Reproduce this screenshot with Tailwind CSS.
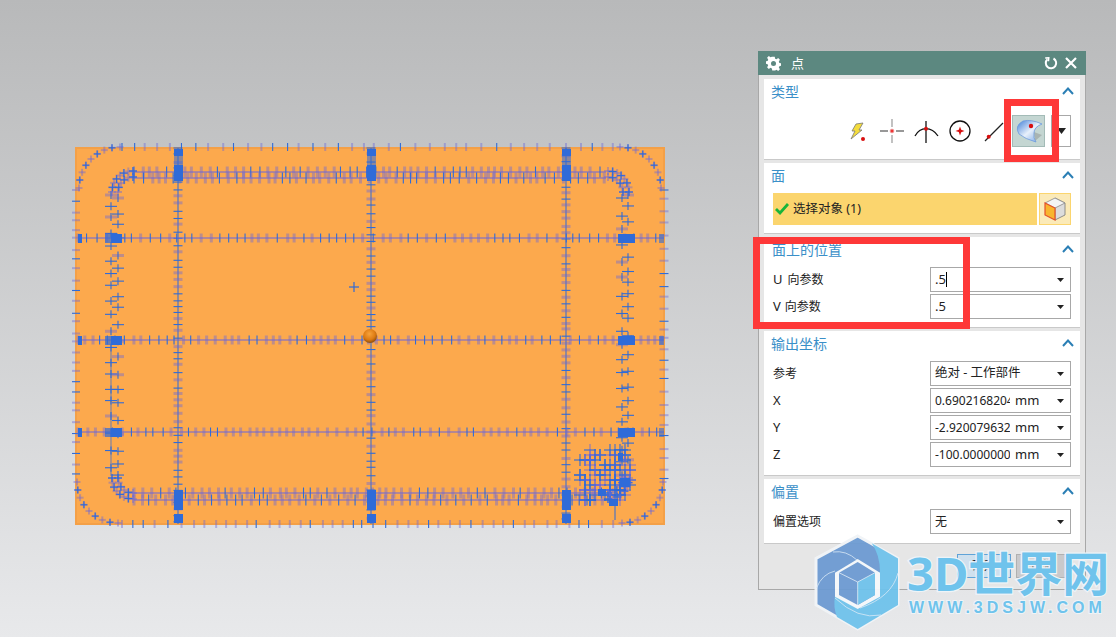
<!DOCTYPE html>
<html lang="zh">
  <head>
    <meta charset="UTF-8" />
    <title>点</title>
    <script src="https://cdn.jsdelivr.net/npm/@tailwindcss/browser@4"></script>
  </head>
  <body class="m-0 overflow-hidden">
    <div class="relative w-[1116px] h-[637px] overflow-hidden bg-linear-to-b from-[#b8b9ba] to-[#e8e9eb] font-['Noto_Sans','Noto_Sans_CJK_SC',sans-serif] text-[12px] text-[#222]">
      <!-- Part in the graphics window -->
      <svg id="part" class="absolute left-0 top-0" width="760" height="637" viewBox="0 0 760 637">
        <defs>
          <radialGradient id="ball" cx="45%" cy="35%" r="70%">
            <stop offset="0" stop-color="#f7a23a" />
            <stop offset="0.6" stop-color="#dd7a12" />
            <stop offset="1" stop-color="#7d4508" />
          </radialGradient>
        </defs>
        <rect x="75" y="147" width="590" height="378" fill="#fdb35f" />
        <rect x="76" y="148" width="588" height="376" fill="#fca94d" stroke="#f4a047" stroke-width="2" />
        <g id="marks"></g>
        <circle cx="370" cy="336" r="7" fill="url(#ball)" />
      </svg>

      <!-- Point dialog -->
      <div class="absolute left-[758px] top-[51px] w-[328px] h-[539px] bg-[#e6e6e6] border-x border-b border-[#a8a8a8]">
        <div class="h-[24px] -mx-px bg-[#5c8880] flex items-center pl-[8px] pr-[9px] text-white">
          <svg width="15" height="15" viewBox="0 0 24 24" fill="#fff">
            <path fill-rule="evenodd" d="M10 1h4l.6 3.200 2.200.9 2.700-1.800 2.800 2.800-1.800 2.700.9 2.200 3.200.6v4l-3.200.6-.9 2.200 1.800 2.700-2.800 2.800-2.700-1.800-2.200.9L14 23h-4l-.6-3.200-2.200-.9-2.700 1.800-2.800-2.800 1.800-2.700-.9-2.200-3.200-.6v-4l3.200-.6.9-2.200-1.800-2.700 2.800-2.800 2.700 1.800 2.200-.9zM12 8a4 4 0 1 0 0 8 4 4 0 0 0 0-8z" />
          </svg>
          <span class="ml-[10px] text-[13px] leading-none">点</span>
          <svg class="ml-auto" width="14" height="14" viewBox="0 0 14 14" fill="none" stroke="#fff" stroke-width="2">
            <path d="M3.500 3.200A5.200 5.200 0 1 0 9.500 2.500" />
            <path d="M1.200 2 4.800 1.800 4.500 5.200" stroke-width="1.400" />
          </svg>
          <svg class="ml-[7px]" width="12" height="12" viewBox="0 0 12 12" fill="none" stroke="#fff" stroke-width="2.200">
            <path d="M1 1l10 10M11 1 1 11" />
          </svg>
        </div>

        <div class="flex flex-col gap-[4px] px-[5px] pt-[4px]">
          <!-- 类型 -->
          <section class="h-[80px] bg-white shadow-[0_1px_0_#c9c9c9]">
            <div class="h-[26px] pb-[2px] flex items-center justify-between pl-[7px] pr-[6px] text-[14px] text-[#3a8fc8]">
              <span>类型</span>
              <svg width="12" height="8" viewBox="0 0 12 8" fill="none" stroke="#2b7fb5" stroke-width="2"><path d="M1 7l5-5.500L11 7" /></svg>
            </div>
            <div class="flex justify-end items-center mt-[10px] pr-[9px] h-[32px]">
              <span class="w-[34px] flex justify-center">
                <svg width="24" height="24" viewBox="0 0 24 24">
                  <path d="M10 5l7-1-4 7h3L5 20l4-8H6z" fill="#f4dc3c" stroke="#777" stroke-width="0.800" />
                  <circle cx="17" cy="20" r="2" fill="#d80f0f" />
                </svg>
              </span>
              <span class="w-[34px] flex justify-center">
                <svg width="26" height="26" viewBox="0 0 26 26" fill="none">
                  <path d="M1 13h8M17 13h8" stroke="#333" stroke-width="1.200" />
                  <path d="M13 1v8M13 17v8" stroke="#999" stroke-width="1.200" />
                  <circle cx="13" cy="13" r="1.800" fill="#e33" stroke="#e88" />
                </svg>
              </span>
              <span class="w-[34px] flex justify-center">
                <svg width="26" height="26" viewBox="0 0 26 26" fill="none" stroke="#111" stroke-width="1.300">
                  <path d="M2 18Q6 10.700 13 10.700T25 18" />
                  <path d="M13 3v22" />
                  <circle cx="13" cy="10.700" r="2" fill="#d80f0f" stroke="none" />
                </svg>
              </span>
              <span class="w-[34px] flex justify-center">
                <svg width="26" height="26" viewBox="0 0 26 26" fill="none">
                  <circle cx="13" cy="13" r="10" stroke="#111" stroke-width="1.300" />
                  <path d="M13 8.500l1.200 3.300 3.300 1.200-3.300 1.200L13 17.500l-1.200-3.500-3.300-1 3.300-1.200z" fill="#d80f0f" />
                </svg>
              </span>
              <span class="w-[34px] flex justify-center">
                <svg width="26" height="26" viewBox="0 0 26 26" fill="none">
                  <path d="M4 23 22 5" stroke="#222" stroke-width="1.300" />
                  <circle cx="7.700" cy="18.700" r="2" fill="#d80f0f" />
                </svg>
              </span>
              <span class="ml-px w-[33px] h-[32px] bg-[#c4d6d2] border border-[#a3bbb7] flex items-center justify-center">
                <svg width="28" height="26" viewBox="0 0 28 26">
                  <defs>
                    <linearGradient id="surf" x1="0" y1="0" x2="1" y2="1">
                      <stop offset="0" stop-color="#3f7fd8" />
                      <stop offset="0.5" stop-color="#e8f0fb" />
                      <stop offset="1" stop-color="#6ea0e4" />
                    </linearGradient>
                  </defs>
                  <path d="M19 14l8 3-7 6z" fill="#a9b4b2" />
                  <path d="M8 3Q16 1 27 6Q19 9 19 15Q18 20 21 24Q10 21 4 16Q-1 8 8 3z" fill="url(#surf)" stroke="#6d9bdc" stroke-width="0.800" />
                  <circle cx="16" cy="8" r="2.200" fill="#d80f0f" />
                </svg>
              </span>
              <span class="ml-[6px] w-[20px] h-[32px] border border-[#a8a8a8] flex items-center justify-center">
                <svg width="9" height="6" viewBox="0 0 9 6"><path d="M0 0h9L4.500 6z" fill="#222" /></svg>
              </span>
            </div>
          </section>

          <!-- 面 -->
          <section class="h-[70px] bg-white shadow-[0_1px_0_#c9c9c9]">
            <div class="h-[26px] pb-[2px] flex items-center justify-between pl-[7px] pr-[6px] text-[14px] text-[#3a8fc8]">
              <span>面</span>
              <svg width="12" height="8" viewBox="0 0 12 8" fill="none" stroke="#2b7fb5" stroke-width="2"><path d="M1 7l5-5.500L11 7" /></svg>
            </div>
            <div class="flex mt-[4px] pl-[9px] pr-[9px] h-[32px]">
              <div class="flex-1 bg-[#fbd56e] flex items-center pl-[2px]">
                <svg width="14" height="12" viewBox="0 0 14 12" fill="none" stroke="#18b53a" stroke-width="2.800"><path d="M1 6l4 4 8-9" /></svg>
                <span class="ml-[4px] text-[12.500px]">选择对象 (1)</span>
              </div>
              <div class="ml-[2px] w-[32px] bg-[#fbeab8] border border-[#fbd56e] flex items-center justify-center">
                <svg width="22" height="24" viewBox="0 0 22 24">
                  <path d="M11 1l10 5v12l-10 5z" fill="#dcdcdc" stroke="#777" stroke-width="0.800" />
                  <path d="M11 1 1 6l10 5 10-5z" fill="#f4f4f4" stroke="#888" stroke-width="0.800" />
                  <path d="M1 6l10 5v12L1 18z" fill="#f8b52e" stroke="#e4502a" stroke-width="1.200" />
                </svg>
              </div>
            </div>
          </section>

          <!-- 面上的位置 -->
          <section class="h-[90px] bg-white shadow-[0_1px_0_#c9c9c9]">
            <div class="h-[26px] pb-[2px] flex items-center justify-between pl-[8px] pr-[6px] text-[14px] text-[#3a8fc8]">
              <span>面上的位置</span>
              <svg width="12" height="8" viewBox="0 0 12 8" fill="none" stroke="#2b7fb5" stroke-width="2"><path d="M1 7l5-5.500L11 7" /></svg>
            </div>
            <div class="flex flex-col gap-[2px] mt-[4px] pl-[9px] pr-[9px]">
              <div class="h-[25px] flex items-center">
                <span class="w-[157px]"><span class="text-[13px] mr-[5px]">U</span>向参数</span>
                <div class="flex-1 h-full border border-[#a8a8a8] flex items-center pl-[4px] pr-[6px] text-[13px]">
                  <span>.5</span><span class="w-px h-[15px] bg-black"></span>
                  <svg class="ml-auto" width="7" height="4" viewBox="0 0 7 4"><path d="M0 0h7L3.500 4z" fill="#222" /></svg>
                </div>
              </div>
              <div class="h-[25px] flex items-center">
                <span class="w-[157px]"><span class="text-[13px] mr-[4px]">V</span>向参数</span>
                <div class="flex-1 h-full border border-[#a8a8a8] flex items-center pl-[4px] pr-[6px] text-[13px]">
                  <span>.5</span>
                  <svg class="ml-auto" width="7" height="4" viewBox="0 0 7 4"><path d="M0 0h7L3.500 4z" fill="#222" /></svg>
                </div>
              </div>
            </div>
          </section>

          <!-- 输出坐标 -->
          <section class="h-[144px] bg-white shadow-[0_1px_0_#c9c9c9]">
            <div class="h-[26px] pb-[2px] flex items-center justify-between pl-[7px] pr-[6px] text-[14px] text-[#3a8fc8]">
              <span>输出坐标</span>
              <svg width="12" height="8" viewBox="0 0 12 8" fill="none" stroke="#2b7fb5" stroke-width="2"><path d="M1 7l5-5.500L11 7" /></svg>
            </div>
            <div class="flex flex-col gap-[2px] mt-[4px] pl-[9px] pr-[9px]">
              <div class="h-[25px] flex items-center">
                <span class="w-[157px]">参考</span>
                <div class="flex-1 h-full border border-[#a8a8a8] flex items-center pl-[4px] pr-[6px] text-[12.500px]">
                  <span>绝对 - 工作部件</span>
                  <svg class="ml-auto" width="7" height="4" viewBox="0 0 7 4"><path d="M0 0h7L3.500 4z" fill="#222" /></svg>
                </div>
              </div>
              <div class="h-[25px] flex items-center">
                <span class="w-[157px] text-[13px]">X</span>
                <div class="flex-1 h-full border border-[#a8a8a8] flex items-center pl-[4px] pr-[6px] text-[13px]">
                  <span class="w-[75px] overflow-hidden whitespace-nowrap text-[12px]">0.6902168204</span>
                  <span class="ml-[5px]">mm</span>
                  <svg class="ml-auto" width="7" height="4" viewBox="0 0 7 4"><path d="M0 0h7L3.500 4z" fill="#222" /></svg>
                </div>
              </div>
              <div class="h-[25px] flex items-center">
                <span class="w-[157px] text-[13px]">Y</span>
                <div class="flex-1 h-full border border-[#a8a8a8] flex items-center pl-[4px] pr-[6px] text-[13px]">
                  <span class="w-[75px] overflow-hidden whitespace-nowrap text-[12px]">-2.920079632</span>
                  <span class="ml-[5px]">mm</span>
                  <svg class="ml-auto" width="7" height="4" viewBox="0 0 7 4"><path d="M0 0h7L3.500 4z" fill="#222" /></svg>
                </div>
              </div>
              <div class="h-[25px] flex items-center">
                <span class="w-[157px] text-[13px]">Z</span>
                <div class="flex-1 h-full border border-[#a8a8a8] flex items-center pl-[4px] pr-[6px] text-[13px]">
                  <span class="w-[75px] overflow-hidden whitespace-nowrap text-[12px]">-100.0000000</span>
                  <span class="ml-[5px]">mm</span>
                  <svg class="ml-auto" width="7" height="4" viewBox="0 0 7 4"><path d="M0 0h7L3.500 4z" fill="#222" /></svg>
                </div>
              </div>
            </div>
          </section>

          <!-- 偏置 -->
          <section class="h-[64px] bg-white shadow-[0_1px_0_#c9c9c9]">
            <div class="h-[26px] pb-[2px] flex items-center justify-between pl-[7px] pr-[6px] text-[14px] text-[#3a8fc8]">
              <span>偏置</span>
              <svg width="12" height="8" viewBox="0 0 12 8" fill="none" stroke="#2b7fb5" stroke-width="2"><path d="M1 7l5-5.500L11 7" /></svg>
            </div>
            <div class="mt-[4px] pl-[9px] pr-[9px]">
              <div class="h-[25px] flex items-center">
                <span class="w-[157px]">偏置选项</span>
                <div class="flex-1 h-full border border-[#a8a8a8] flex items-center pl-[4px] pr-[6px]">
                  <span>无</span>
                  <svg class="ml-auto" width="7" height="4" viewBox="0 0 7 4"><path d="M0 0h7L3.500 4z" fill="#222" /></svg>
                </div>
              </div>
            </div>
          </section>

          <div class="flex justify-end gap-[5px] mt-[7px] pr-[10px]">
            <button class="w-[54px] h-[24px] bg-[#cfe0ee] border border-[#5fa3d8]">确定</button>
            <button class="w-[54px] h-[24px] bg-[#c9c9cb] border border-[#b0b0b0]">取消</button>
          </div>
        </div>
      </div>

      <!-- Red annotation boxes -->
      <div class="absolute left-[1004px] top-[99px] w-[55px] h-[63px] border-[7px] border-[#fe3838]"></div>
      <div class="absolute left-[753px] top-[237px] w-[217px] h-[92px] border-[7px] border-[#fe3838]"></div>

      <!-- Watermark -->
      <svg class="absolute left-[810px] top-[530px] opacity-95" width="96" height="105" viewBox="810 530 96 105">
        <path d="M857.700 536 898 558.500v46.500L857.700 629 816 605v-46.500z" fill="#6d9bd2" stroke="#f1f4f7" stroke-width="3" />
        <path d="M871.700 543.300 898 558.500V605L857.700 629 837 617Q833 607 835 596L880 572Q880 555 871.700 543.300z" fill="#6fc3ec" />
        <path d="M857.700 559 880 572.700v24L857.700 609 835 596.700v-24z" fill="#f5f8fb" />
        <path d="M857.700 562 875 572.700V595L857.700 605 839 595v-22.300z" fill="#6d9bd2" />
        <path d="M857.700 582 875 572.700V595L857.700 605z" fill="#6fc3ec" />
        <path d="M839 572.700 857.700 582 875 572.700M857.700 582v23" fill="none" stroke="#e4eff9" stroke-width="0.800" />
        <path d="M816.500 588Q822 574 835 571M833 552Q846 550 857 560M898 573Q892 597 860 608M881 615Q858 620 835 598" fill="none" stroke="#dbeaf7" stroke-width="0.800" />
      </svg>
      <div class="absolute left-[907px] top-[547px] h-[52px] flex items-center text-[47px] leading-none font-bold text-[#6fc3ec] [-webkit-text-stroke:2.500px_#eef4f8] [paint-order:stroke_fill] whitespace-nowrap">3D世界网</div>
      <div class="absolute left-[909px] top-[598px] text-[16px] leading-[20px] font-bold tracking-[4px] text-[#6fc3ec] [-webkit-text-stroke:2px_#eef4f8] [paint-order:stroke_fill] whitespace-nowrap font-['Liberation_Sans',sans-serif]">WWW.3DSJW.COM</div>
    </div>

    <script>
      // scatter the mesh point markers over the plate
      const marks = document.getElementById("marks");
      let seed = 11;
      const rnd = () => {
        seed = (seed * 16807) % 2147483647;
        return seed / 2147483647;
      };
      const NS = "http://www.w3.org/2000/svg";
      const BLUE = "#2f6bd8";
      const HAZE = "#6a66dc";
      const line = (x1, y1, x2, y2, color, w, op) => {
        const l = document.createElementNS(NS, "line");
        l.setAttribute("x1", x1);
        l.setAttribute("y1", y1);
        l.setAttribute("x2", x2);
        l.setAttribute("y2", y2);
        l.setAttribute("stroke", color);
        l.setAttribute("stroke-width", w);
        if (op) l.setAttribute("stroke-opacity", op);
        marks.appendChild(l);
      };
      const solid = (x, y, nx, ny, half) => line(x - nx * half, y - ny * half, x + nx * half, y + ny * half, BLUE, 1.1);
      const haze = (x, y, nx, ny, half, w) => line(x - nx * half, y - ny * half, x + nx * half, y + ny * half, HAZE, w, 0.42);
      const tick = (x, y, nx, ny, half, solidChance, w = 3) => {
        if (rnd() < solidChance) solid(x, y, nx, ny, half);
        else haze(x, y, nx, ny, half, w);
      };
      // ticks along a straight stretch
      const run = (x1, y1, x2, y2, step, half, solidChance, w) => {
        const len = Math.hypot(x2 - x1, y2 - y1);
        const ux = (x2 - x1) / len;
        const uy = (y2 - y1) / len;
        for (let d = 0; d < len; d += step * (0.75 + rnd() * 0.5)) {
          tick(x1 + ux * d, y1 + uy * d, -uy, ux, half, solidChance, w);
        }
      };
      // little crosses along a band
      const crosses = (x1, y1, x2, y2, step, long, short) => {
        const len = Math.hypot(x2 - x1, y2 - y1);
        const ux = (x2 - x1) / len;
        const uy = (y2 - y1) / len;
        for (let d = 0; d < len; d += step * (0.7 + rnd() * 0.6)) {
          const x = x1 + ux * d;
          const y = y1 + uy * d;
          tick(x, y, -uy, ux, long, 0.75);
          solid(x, y, ux, uy, short);
        }
      };
      // stair stepped ticks around a corner
      const arc = (cx, cy, r, a0, a1, count, half) => {
        for (let i = 0; i <= count; i++) {
          const a = ((a0 + ((a1 - a0) * i) / count) * Math.PI) / 180;
          const x = cx + Math.cos(a) * r;
          const y = cy + Math.sin(a) * r;
          haze(x, y, 1, 0, half, 2);
          haze(x, y, 0, 1, half, 2);
          if (i % 2) {
            solid(x, y, 1, 0, half);
            solid(x, y, 0, 1, half);
          }
        }
      };

      // plate edge ticks, short and outside the sheet
      run(122, 147, 620, 147, 13, 4, 0.35, 2);
      run(122, 524, 620, 524, 11, 4, 0.35, 2);
      run(76, 190, 76, 480, 10, 4, 0.35, 2);
      run(664, 190, 664, 480, 11, 4.500, 0.35, 2);
      arc(120, 188, 41, 180, 270, 8, 3.500);
      arc(620, 188, 41, 270, 360, 8, 3.500);
      arc(118, 482, 41, 90, 180, 8, 3.500);
      arc(622, 482, 41, 0, 90, 8, 3.500);

      // inner loop, two parallel bands
      [172, 178, 493, 500].forEach((y) => {
        line(134, y, 606, y, HAZE, 2, 0.5);
        run(134, y, 606, y, 8, 5.500, 0.4);
      });
      crosses(111, 195, 111, 476, 14, 6, 4);
      crosses(118, 198, 118, 476, 14, 6, 4);
      crosses(622, 198, 622, 476, 15, 6, 4);
      crosses(628, 195, 628, 476, 15, 6, 4);
      line(111, 345, 111, 476, BLUE, 0.9, 0.8);
      [
        [133, 192, 180, 270],
        [608, 192, 270, 360],
        [133, 478, 90, 180],
        [608, 478, 0, 90],
      ].forEach(([cx, cy, a0, a1]) => {
        arc(cx, cy, 21, a0, a1, 7, 4);
        arc(cx, cy, 15, a0, a1, 5, 4);
      });

      // main grid lines
      [178, 371, 566].forEach((x) => {
        line(x, 148, x, 524, BLUE, 1);
        run(x, 148, x, 524, 7, 4.500, 0.45);
      });
      [238, 340, 432].forEach((y) => {
        line(78, y, 664, y, HAZE, 2, 0.5);
        run(78, y, 664, y, 8.500, 4.500, 0.45);
      });

      // dense knot near the lower right corner, markers sit on a rough grid
      for (let i = 0; i < 110; i++) {
        const x = 580 + Math.round((rnd() * 50) / 5) * 5;
        const y = 450 + Math.round((rnd() * 50) / 5) * 5;
        tick(x, y, 1, 0, 6, 0.55, 2);
        tick(x, y, 0, 1, 6, 0.55, 2);
      }
      line(615, 444, 615, 520, BLUE, 1);

      // solid crossings where markers pile up
      const block = (x, y, w, h, op) => {
        const r = document.createElementNS(NS, "rect");
        r.setAttribute("x", x);
        r.setAttribute("y", y);
        r.setAttribute("width", w);
        r.setAttribute("height", h);
        r.setAttribute("fill", BLUE);
        if (op) r.setAttribute("fill-opacity", op);
        marks.appendChild(r);
      };
      [174, 367, 562].forEach((x) => {
        block(x, 149, 9, 7);
        block(x, 156, 9, 9, 0.55);
        block(x, 165, 9, 16);
        block(x, 490, 9, 20);
        block(x, 514, 9, 9);
      });
      [238, 340, 432].forEach((y) => {
        block(78, y - 4, 4, 9);
        block(105, y - 4, 17, 9, 0.7);
        block(111, y - 4, 11, 9);
        block(618, y - 4, 17, 9);
        block(659, y - 4, 5, 9, 0.6);
      });
      block(598, 489, 8, 7);
      block(609, 499, 9, 7);
      block(620, 478, 10, 9);
      block(618, 453, 5, 8);

      // lone marker in the middle of the plate
      line(349, 287, 359, 287, BLUE, 1.2);
      line(354, 282, 354, 292, BLUE, 1.2);
    </script>
  </body>
</html>
